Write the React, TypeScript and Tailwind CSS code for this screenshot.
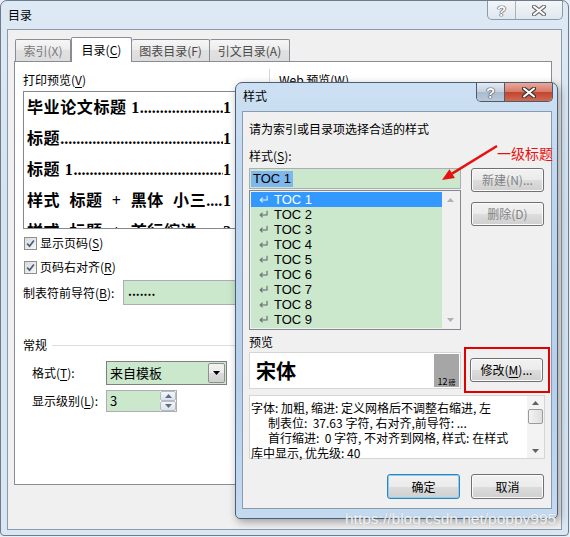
import React from 'react';

const ui = "font-['Noto_Sans_CJK_SC',sans-serif]";
const btnBg = 'bg-[linear-gradient(#f2f2f2,#ebebeb_50%,#dddddd_50%,#cfcfcf)]';

const U: React.FC<{ children: React.ReactNode }> = ({ children }) => (
  <span className="underline underline-offset-[2px] decoration-1">{children}</span>
);

const Check: React.FC = () => (
  <span className="w-[13px] h-[13px] border border-[#8e8f8f] bg-[linear-gradient(135deg,#dadada,#f7f7f7)] flex items-center justify-center">
    <svg width="9" height="9" viewBox="0 0 9 9">
      <path d="M1.2 4.6 L3.6 7.2 L7.9 1.4" fill="none" stroke="#4a5f80" strokeWidth="1.7" />
    </svg>
  </span>
);

const Tri: React.FC<{ up?: boolean; color?: string }> = ({ up, color = '#9a9a9a' }) => (
  <svg width="7" height="4" viewBox="0 0 7 4">
    <path d={up ? 'M0 4 L3.5 0 L7 4 Z' : 'M0 0 L3.5 4 L7 0 Z'} fill={color} />
  </svg>
);

const CloseGlyph: React.FC<{ dark?: boolean }> = ({ dark }) => (
  <svg width="14" height="11" viewBox="0 0 14 11">
    <path d="M2 1.5 L12 9.5 M12 1.5 L2 9.5" stroke={dark ? '#3b3b3b' : '#6e6e6e'} strokeWidth="4.2" strokeLinecap="round" />
    <path d="M2 1.5 L12 9.5 M12 1.5 L2 9.5" stroke="#ffffff" strokeWidth="2" strokeLinecap="round" />
  </svg>
);

const Help: React.FC = () => (
  <span className="font-['Liberation_Sans',sans-serif] font-bold text-[15px] leading-none text-white [text-shadow:0_0_1px_#333,0_0_1px_#333,0_0_1px_#333]">?</span>
);

const Button: React.FC<{ children: React.ReactNode; disabled?: boolean; focused?: boolean; h?: string }> = ({
  children,
  disabled,
  focused,
  h = 'h-[24px]',
}) => (
  <div
    className={`w-[73px] shrink-0 ${h} rounded-[3px] border ${
      focused ? 'border-[#3c7fb1] shadow-[inset_0_0_0_1px_#7fd3f7]' : 'border-[#707070] shadow-[inset_0_0_0_1px_#fbfbfb]'
    } ${btnBg} flex items-center justify-center text-[12px] leading-none ${disabled ? 'text-[#838383]' : 'text-black'}`}
  >
    {children}
  </div>
);

const rows: [string, string][] = [
  ['毕业论文标题 1', '1'],
  ['标题', '1'],
  ['标题 1', '1'],
  ['样式  标题  +  黑体  小三', '1'],
  ['样式  标题  +  首行缩进', '2'],
];

const tocs = ['TOC 1', 'TOC 2', 'TOC 3', 'TOC 4', 'TOC 5', 'TOC 6', 'TOC 7', 'TOC 8', 'TOC 9'];

export default function App() {
  return (
    <div className={`w-[570px] h-[537px] bg-[#e6eff7] relative overflow-hidden ${ui} text-[12px] text-black`}>
      {/* outer window: 目录 */}
      <div className="w-[569px] h-[536px] rounded-t-[7px] rounded-b-[4px] border border-[#6f7b88] bg-[linear-gradient(180deg,#dde9f5,#d3e3f2_40%,#d9e7f4)] flex flex-col">
        <div className="h-[28px] flex items-start justify-between pl-[7px] pr-[5px]">
          <span className="mt-[6px] leading-[16px]">目录</span>
          <div className="flex h-[19px] rounded-b-[5px] border border-t-0 border-[#8d99a6] bg-[linear-gradient(#f3f6f9,#dfe7ef)] overflow-hidden">
            <div className="w-[28px] flex items-center justify-center border-r border-[#a9b3bd]">
              <Help />
            </div>
            <div className="w-[46px] flex items-center justify-center">
              <CloseGlyph />
            </div>
          </div>
        </div>

        <div className="mx-[6px] mb-[5px] flex-1 border border-[#8d99a8] bg-[#f0f0f0] pl-[6px] pt-[7px] pr-[9px] pb-[44px] flex flex-col">
          {/* tabs */}
          <div className="h-[24px] flex items-end pl-[1px]">
            <div className="h-[22px] w-[56px] border border-[#898c95] border-b-0 rounded-t-[2px] bg-[linear-gradient(#f6f6f6,#ebebeb_50%,#e1e1e1_50%,#dcdcdc)] flex items-center justify-center text-[#7a7a7a]">
              索引(X)
            </div>
            <div className="h-[25px] w-[61px] -mb-px relative z-10 border border-[#898c95] border-b-0 rounded-t-[2px] bg-white flex items-center justify-center">
              目录(<U>C</U>)
            </div>
            <div className="h-[22px] w-[78px] border border-l-0 border-[#898c95] border-b-0 rounded-t-[2px] bg-[linear-gradient(#f6f6f6,#ebebeb_50%,#e1e1e1_50%,#dcdcdc)] flex items-center justify-center text-[#4a4a4a]">
              图表目录(F)
            </div>
            <div className="h-[22px] w-[80px] border border-l-0 border-[#898c95] border-b-0 rounded-t-[2px] bg-[linear-gradient(#f6f6f6,#ebebeb_50%,#e1e1e1_50%,#dcdcdc)] flex items-center justify-center text-[#4a4a4a]">
              引文目录(A)
            </div>
          </div>

          {/* tab panel */}
          <div className="flex-1 border border-[#898c95] bg-white flex">
            <div className="w-[254px] pl-[8px] flex flex-col">
              <div className="mt-[10px] leading-[16px]">
                打印预览(<U>V</U>)
              </div>
              <div className="mt-[3px] h-[138px] w-[215px] border border-[#828790] bg-white overflow-hidden pl-[3px] pr-[6px] font-['Liberation_Serif','Noto_Sans_CJK_SC',serif] font-bold text-[16px] leading-[31px]">
                {rows.map(([label, page]) => (
                  <div key={label} className="flex whitespace-pre">
                    <span className="tracking-[0.6px]">{label}</span>
                    <span className="flex-1 overflow-hidden whitespace-nowrap">{'.'.repeat(90)}</span>
                    <span>{page}</span>
                  </div>
                ))}
              </div>

              <div className="mt-[6px] h-[16px] flex items-center gap-[3px] pl-[1px]">
                <Check />
                <span>
                  显示页码(<U>S</U>)
                </span>
              </div>
              <div className="mt-[8px] h-[16px] flex items-center gap-[3px] pl-[1px]">
                <Check />
                <span>
                  页码右对齐(<U>R</U>)
                </span>
              </div>
              <div className="mt-[5px] h-[25px] flex items-center">
                <span className="w-[100px]">
                  制表符前导符(<U>B</U>):
                </span>
                <div className="h-[25px] w-[140px] border border-[#abadb3] bg-[#cbe8cd] flex items-center pl-[4px] pb-[4px] font-bold text-[12px]">
                  .......
                </div>
              </div>

              <div className="mt-[32px] h-[16px] flex items-center gap-[5px]">
                <span>常规</span>
                <div className="flex-1 h-px bg-[#d5dfe5]" />
              </div>

              <div className="mt-[8px] pl-[9px] flex items-center">
                <span className="w-[74px]">
                  格式(<U>T</U>):
                </span>
                <div className="w-[121px] h-[24px] border border-[#7f7f7f] bg-[#cbe8cd] flex">
                  <span className="flex-1 pl-[3px] flex items-center text-[13px]">来自模板</span>
                  <div className="w-[17px] m-[1px] border border-[#8e8f8f] rounded-[2px] bg-[linear-gradient(#f2f2f2,#ebebeb_50%,#dddddd_50%,#cfcfcf)] flex items-center justify-center">
                    <Tri color="#000" />
                  </div>
                </div>
              </div>

              <div className="mt-[5px] pl-[9px] flex items-center">
                <span className="w-[74px]">
                  显示级别(<U>L</U>):
                </span>
                <div className="w-[71px] h-[22px] border border-[#abadb3] bg-white flex">
                  <span className="flex-1 bg-[#cbe8cd] pl-[3px] flex items-center text-[13px]">3</span>
                  <div className="w-[16px] flex flex-col">
                    <div className="flex-1 border border-[#b5bcc7] rounded-[2px] bg-[linear-gradient(#f4f6f9,#dde3ea)] flex items-center justify-center">
                      <Tri up color="#5a6f8e" />
                    </div>
                    <div className="flex-1 border border-[#b5bcc7] rounded-[2px] bg-[linear-gradient(#f4f6f9,#dde3ea)] flex items-center justify-center">
                      <Tri color="#5a6f8e" />
                    </div>
                  </div>
                </div>
              </div>
            </div>

            <div className="mt-[7px] mb-[7px] w-px bg-[#d0d7de]" />

            <div className="flex-1 pl-[9px] flex flex-col">
              <div className="mt-[10px] leading-[16px]">
                Web 预览(<U>W</U>)
              </div>
              <div className="mt-[3px] h-[138px] w-[264px] border border-[#828790] bg-white" />
            </div>
          </div>
        </div>
      </div>

      {/* inner window: 样式 */}
      <div className="absolute left-[235px] top-[82px] w-[323px] h-[437px] rounded-t-[7px] rounded-b-[5px] border border-[#4d5f73] bg-[linear-gradient(180deg,#cde0f3,#bcd5ee_30%,#b6d0ec_70%,#c4daf0)] shadow-[2px_3px_8px_rgba(0,0,0,0.35)] flex flex-col">
        <div className="h-[28px] flex items-start justify-between pl-[7px] pr-[4px]">
          <span className="mt-[5px] leading-[16px]">样式</span>
          <div className="flex h-[19px] rounded-b-[5px] border border-t-0 border-[#4b5b6d] overflow-hidden">
            <div className="w-[28px] flex items-center justify-center border-r border-[#4b5b6d] bg-[linear-gradient(#e3ebf3,#c3d0de_50%,#a9bacd_50%,#b9c9da)]">
              <Help />
            </div>
            <div className="w-[47px] flex items-center justify-center bg-[linear-gradient(#e9a99c,#d67866_50%,#c2432e_50%,#cf6a4f)]">
              <CloseGlyph dark />
            </div>
          </div>
        </div>

        <div className="ml-[6px] mr-[5px] mb-[9px] flex-1 border border-[#8a9bb0] bg-[#f0f0f0] pl-[6px] pr-[6px] pt-[9px] flex flex-col">
          <div className="leading-[16px]">请为索引或目录项选择合适的样式</div>
          <div className="mt-[11px] leading-[16px]">
            样式(<U>S</U>):
          </div>

          <div className="mt-[4px] flex gap-[10px]">
            <div className="w-[212px] shrink-0 flex flex-col">
              <div className="h-[21px] border border-[#abadb3] bg-[#cbe8cd] flex items-center pl-[1px]">
                <span className="bg-[#7fb7ec] px-[2px] leading-[16px] font-['Liberation_Sans',sans-serif] text-[13px]">TOC 1</span>
              </div>
              <div className="mt-[1px] h-[140px] border border-[#828790] bg-[#f0f0f0] p-[1px] flex">
                <div className="w-[191px] bg-[#cbe8cd] flex flex-col">
                  {tocs.map((t, i) => (
                    <div
                      key={t}
                      className={`h-[15px] flex items-center pl-[8px] font-['Liberation_Sans',sans-serif] text-[13px] leading-none ${
                        i === 0 ? 'bg-[#3399ff] text-white' : 'text-black'
                      }`}
                    >
                      <span className={`w-[15px] text-[13px] ${i === 0 ? 'text-[#d5e8fc]' : 'text-[#6f6f6f]'}`}>↵</span>
                      <span>{t}</span>
                    </div>
                  ))}
                </div>
                <div className="flex-1 bg-[#f0f0f0] flex flex-col justify-between items-center py-[6px]">
                  <Tri up color="#b0b0b0" />
                  <Tri color="#b0b0b0" />
                </div>
              </div>
            </div>
            <div className="flex flex-col">
              <Button disabled>新建(N)...</Button>
              <div className="mt-[10px]">
                <Button disabled>删除(D)</Button>
              </div>
            </div>
          </div>

          <div className="mt-[4px] leading-[16px]">预览</div>
          <div className="flex items-start">
            <div className="mt-[2px] w-[212px] shrink-0 h-[37px] border border-[#d5d5d5] bg-white flex">
              <span className="flex-1 pl-[6px] flex items-center font-bold text-[20px] leading-none">宋体</span>
              <div className="w-[25px] m-[1px] bg-[#a6a6a6] flex items-end justify-center pb-[1px] leading-none">
                <span className="text-[9px]">12</span>
                <span className="text-[7px] ml-[1px]">磅</span>
              </div>
            </div>
            <div className="ml-[3px] -mt-[3px] w-[86px] shrink-0 h-[46px] border-2 border-[#e00000] pl-[4px] pt-[9px]">
              <Button>
                修改(<U>M</U>)...
              </Button>
            </div>
          </div>

          <div className="mt-[2px] w-[296px] shrink-0 h-[64px] border border-[#d5d5d5] bg-white flex">
            <div className="flex-1 pl-[1px] pt-[4px] text-[12px] leading-[15px] whitespace-pre">
              <div>字体: 加粗, 缩进: 定义网格后不调整右缩进, 左</div>
              <div className="pl-[17px]">制表位:  37.63 字符, 右对齐,前导符: ...</div>
              <div className="pl-[17px]">首行缩进:  0 字符, 不对齐到网格, 样式: 在样式</div>
              <div>库中显示, 优先级: 40</div>
            </div>
            <div className="w-[17px] bg-[#f3f3f3] flex flex-col items-center py-[5px]">
              <Tri up color="#606060" />
              <div className="mt-[4px] w-[15px] h-[15px] border border-[#9a9a9a] rounded-[2px] bg-[linear-gradient(90deg,#f3f3f3,#dedede)]" />
              <div className="flex-1" />
              <Tri color="#606060" />
            </div>
          </div>

          <div className="mt-[15px] flex justify-end gap-[11px] pr-[1px]">
            <Button focused h="h-[25px]">确定</Button>
            <Button h="h-[25px]">取消</Button>
          </div>
        </div>
      </div>

      {/* annotation */}
      <svg className="absolute left-[440px] top-[142px]" width="60" height="42" viewBox="0 0 60 42">
        <path d="M57 4 L12 31.6" stroke="#e81010" strokeWidth="2.5" />
        <path d="M2 38 L14.9 35.9 L9.5 27.3 Z" fill="#e81010" />
      </svg>
      <span className="absolute left-[497px] top-[144px] text-[14px] leading-[18px] text-[#e81010]">一级标题</span>

      {/* watermark */}
      <span className="absolute left-[345px] top-[508px] font-['Liberation_Sans',sans-serif] text-[15.5px] leading-[22px] text-white/85 [text-shadow:0_0_1px_#9aa4ae]">
        https://blog.csdn.net/poppy995
      </span>
    </div>
  );
}
